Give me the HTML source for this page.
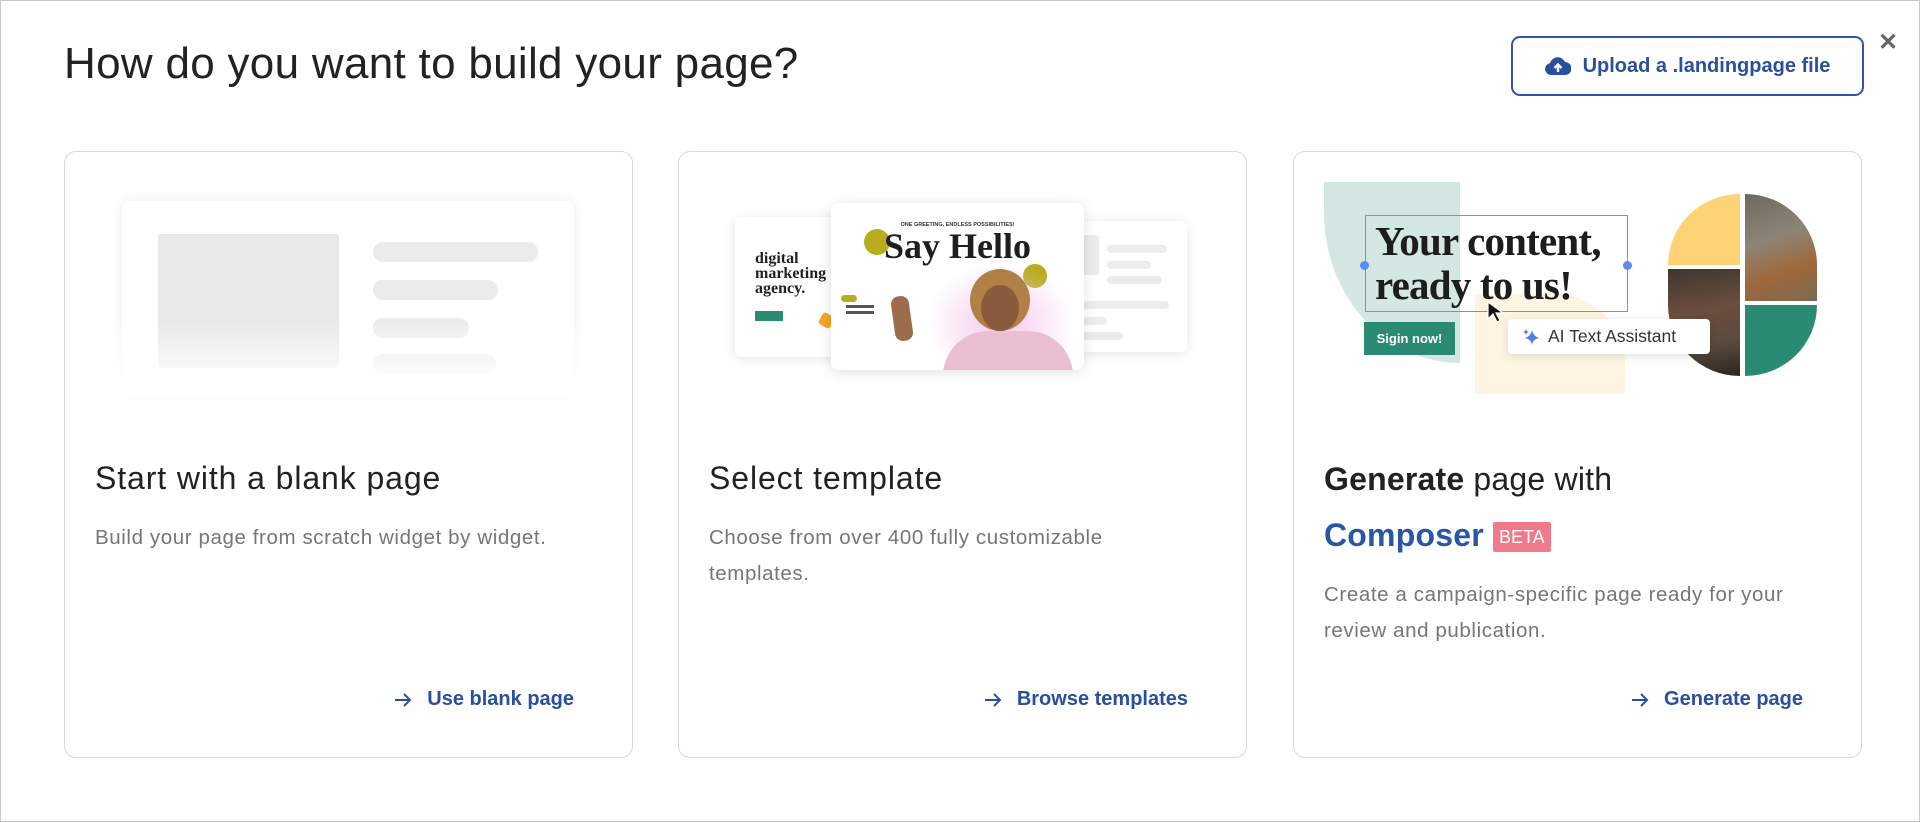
<!DOCTYPE html>
<html><head><meta charset="utf-8"><style>
*{box-sizing:border-box;margin:0;padding:0}
body{width:1920px;height:822px;background:#fff;font-family:"Liberation Sans",Arial,sans-serif;position:relative;overflow:hidden}
.frame{position:absolute;left:0;top:0;width:1920px;height:822px;border:1px solid #c8c8c8}
.abs{position:absolute}
h1{position:absolute;left:64px;top:39px;font-size:44px;font-weight:400;color:#222;letter-spacing:0.3px}
.upload{position:absolute;left:1511px;top:36px;width:353px;height:60px;border:2px solid #2d56a4;border-radius:9px;color:#2a4f9e;font-weight:700;font-size:20px;display:flex;align-items:center;justify-content:center;gap:12px}
.close{position:absolute;left:1878px;top:28px;font-size:24px;color:#666;font-weight:700}
.card{position:absolute;top:151px;width:569px;height:607px;border:1.5px solid #d9d9d9;border-radius:12px;overflow:hidden}
.ttl{position:absolute;left:30px;font-size:32px;color:#222;letter-spacing:0.9px}
.desc{position:absolute;left:30px;font-size:20.5px;color:#767676;line-height:36px;width:470px;letter-spacing:0.6px}
.link{position:absolute;right:58px;top:536px;color:#2a4f9e;font-weight:700;font-size:20px;display:flex;align-items:center;gap:14px}
.bar{position:absolute;background:#ebebeb;border-radius:12px;height:20px}
</style></head><body>
<div class="frame"></div>
<h1>How do you want to build your page?</h1>
<div class="upload"><svg width="26" height="20" viewBox="0 0 26 20"><path d="M6 19a6 6 0 0 1-1-11.9A8 8 0 0 1 20 6a6.5 6.5 0 0 1 0 13z" fill="#2a4f9e"/><path d="M13 16V9M9.5 12L13 8.5 16.5 12" stroke="#fff" stroke-width="2.4" fill="none"/></svg>Upload a .landingpage file</div>
<div class="close">✕</div>

<!-- card 1 -->
<div class="card" style="left:64px">
 <div class="abs" style="left:57px;top:49px;width:452px;height:190px;border-radius:6px;box-shadow:0 0 14px rgba(0,0,0,0.07);background:#fff"></div>
 <div class="abs" style="left:93px;top:82px;width:181px;height:134px;background:#e8e8e8;border-radius:3px"></div>
 <div class="bar" style="left:308px;top:90px;width:165px"></div>
 <div class="bar" style="left:308px;top:128px;width:125px"></div>
 <div class="bar" style="left:308px;top:166px;width:96px"></div>
 <div class="bar" style="left:308px;top:202px;width:123px"></div>
 <div class="abs" style="left:40px;top:165px;width:490px;height:80px;background:linear-gradient(rgba(255,255,255,0),#fff 90%)"></div>
 <div class="ttl" style="top:308px">Start with a blank page</div>
 <div class="desc" style="top:368px;width:500px">Build your page from scratch widget by widget.</div>
 <div class="link"><svg width="20" height="16" viewBox="0 0 20 16"><path d="M2 8H17M11 2L17 8 11 14" stroke="#2a4f9e" stroke-width="2" fill="none"/></svg>Use blank page</div>
</div>

<!-- card 2 -->
<div class="card" style="left:678px">
 <div class="abs" style="left:400px;top:69px;width:108px;height:131px;background:#fff;border-radius:6px;box-shadow:0 2px 12px rgba(0,0,0,0.1)">
  <div class="abs" style="left:4px;top:14px;width:16px;height:40px;background:#ececec;border-radius:3px"></div>
  <div class="abs" style="left:28px;top:24px;width:60px;height:8px;background:#ececec;border-radius:4px"></div>
  <div class="abs" style="left:28px;top:40px;width:44px;height:8px;background:#ececec;border-radius:4px"></div>
  <div class="abs" style="left:28px;top:55px;width:55px;height:8px;background:#ececec;border-radius:4px"></div>
  <div class="abs" style="left:4px;top:80px;width:86px;height:8px;background:#ececec;border-radius:4px"></div>
  <div class="abs" style="left:4px;top:96px;width:24px;height:8px;background:#ececec;border-radius:4px"></div>
  <div class="abs" style="left:4px;top:111px;width:40px;height:8px;background:#ececec;border-radius:4px"></div>
 </div>
 <div class="abs" style="left:56px;top:65px;width:130px;height:140px;background:#fff;border-radius:6px;box-shadow:0 2px 12px rgba(0,0,0,0.1)">
  <div class="abs" style="left:20px;top:34px;font-family:'Liberation Serif',serif;font-weight:700;font-size:16px;line-height:15px;color:#222">digital<br>marketing<br>agency.</div>
  <div class="abs" style="left:20px;top:94px;width:28px;height:10px;background:#2b8a74"></div>
  <div class="abs" style="left:85px;top:97px;width:13px;height:13px;background:#f5a623;border-radius:3px;transform:rotate(30deg)"></div>
 </div>
 <div class="abs" style="left:152px;top:51px;width:253px;height:167px;background:#fff;border-radius:8px;box-shadow:0 2px 14px rgba(0,0,0,0.12);overflow:hidden">
  <div class="abs" style="left:0;top:19px;width:253px;text-align:center;font-size:5.5px;font-weight:700;color:#333">ONE GREETING, ENDLESS POSSIBILITIES!</div>
  <div class="abs" style="left:33px;top:26px;width:26px;height:26px;border-radius:50%;background:#b6ad1f"></div>
  <div class="abs" style="left:192px;top:61px;width:24px;height:24px;border-radius:50%;background:#b6ad1f"></div>
  <div class="abs" style="left:0;top:22px;width:253px;text-align:center;font-family:'Liberation Serif',serif;font-weight:700;font-size:36px;color:#1e1e1e">Say Hello</div>
  <div class="abs" style="left:95px;top:60px;width:150px;height:120px;border-radius:50%;background:radial-gradient(#f5c8ee,rgba(255,255,255,0) 70%)"></div>
  <div class="abs" style="left:112px;top:128px;width:130px;height:60px;border-radius:45px 45px 0 0;background:#ebbfd2"></div>
  <div class="abs" style="left:139px;top:66px;width:60px;height:62px;border-radius:50%;background:#b08047"></div>
  <div class="abs" style="left:150px;top:82px;width:38px;height:46px;border-radius:50%;background:#8a5a3c"></div>
  <div class="abs" style="left:62px;top:93px;width:18px;height:45px;border-radius:8px;background:#9c6c4c;transform:rotate(-8deg)"></div>
  <div class="abs" style="left:10px;top:92px;width:16px;height:7px;border-radius:4px;background:#b6ad1f"></div>
  <div class="abs" style="left:15px;top:102px;width:28px;height:3px;background:#555"></div>
  <div class="abs" style="left:15px;top:108px;width:28px;height:3px;background:#555"></div>
 </div>
 <div class="ttl" style="top:308px">Select template</div>
 <div class="desc" style="top:368px;width:430px">Choose from over 400 fully customizable templates.</div>
 <div class="link"><svg width="20" height="16" viewBox="0 0 20 16"><path d="M2 8H17M11 2L17 8 11 14" stroke="#2a4f9e" stroke-width="2" fill="none"/></svg>Browse templates</div>
</div>

<!-- card 3 -->
<div class="card" style="left:1293px">
 <div class="abs" style="left:30px;top:30px;width:136px;height:181px;background:#d5e7e2;border-radius:0 0 0 136px/0 0 0 150px"></div>
 <div class="abs" style="left:181px;top:142px;width:150px;height:100px;background:#fdf5e2;border-radius:0 70px 0 0"></div>
 <div class="abs" style="left:71px;top:63px;width:263px;height:97px;border:1.5px solid #6b94e6"></div>
 <div class="abs" style="left:66px;top:109px;width:9px;height:9px;border-radius:50%;background:#5b8def"></div>
 <div class="abs" style="left:329px;top:109px;width:9px;height:9px;border-radius:50%;background:#5b8def"></div>
 <div class="abs" style="left:81px;top:67px;font-family:'Liberation Serif',serif;font-weight:700;font-size:41px;line-height:44px;color:#1d1d1d;letter-spacing:-0.8px">Your content,<br>ready to us!</div>
 <div class="abs" style="left:70px;top:170px;width:91px;height:33px;background:#2b8a74;color:#fff;font-weight:700;font-size:13px;text-align:center;line-height:33px">Sigin now!</div>
 <svg class="abs" style="left:192px;top:148px" width="20" height="24" viewBox="0 0 20 24"><path d="M2 2L2 19 7 14 11 22 14 20.5 10 13 17 13Z" fill="#111" stroke="#fff" stroke-width="1.2"/></svg>
 <div class="abs" style="left:374px;top:42px;width:72px;height:71px;background:#fed375;border-radius:72px 0 0 0/71px 0 0 0"></div>
 <div class="abs" style="left:451px;top:42px;width:72px;height:107px;background:linear-gradient(160deg,#6e6860,#8d8478 40%,#a0683a 70%,#7a6a55);border-radius:0 72px 0 0/0 71px 0 0"></div>
 <div class="abs" style="left:374px;top:117px;width:72px;height:107px;background:linear-gradient(170deg,#3e3630,#6b4e3e 40%,#5a4a3e 70%,#2a2420);border-radius:0 0 0 72px/0 0 0 71px"></div>
 <div class="abs" style="left:451px;top:153px;width:72px;height:71px;background:#2b8a74;border-radius:0 0 72px 0/0 0 71px 0"></div>
 <div class="abs" style="left:214px;top:167px;width:202px;height:35px;background:#fff;border-radius:4px;box-shadow:0 2px 10px rgba(0,0,0,0.12);font-size:17.5px;color:#333;line-height:35px;padding-left:40px">AI Text Assistant
  <svg class="abs" style="left:14px;top:9px" width="18" height="18" viewBox="0 0 18 18"><path d="M10 2Q11 8 17 10Q11 11 10 17Q9 11 3 10Q9 8 10 2Z" fill="#4f7fe8"/><path d="M4 1Q4.5 3.5 7 4Q4.5 4.5 4 7Q3.5 4.5 1 4Q3.5 3.5 4 1Z" fill="#4f7fe8"/></svg>
 </div>
 <div class="ttl" style="top:309px;letter-spacing:0.2px"><b>Generate</b> page with</div>
 <div class="ttl" style="top:365px;color:#2a56a6;font-weight:700;letter-spacing:0.2px">Composer <span style="display:inline-block;vertical-align:3px;background:#f07a8c;color:#fff;font-weight:400;font-size:18px;padding:3px 6px;border-radius:2px;line-height:24px;letter-spacing:0">BETA</span></div>
 <div class="desc" style="top:425px;width:480px">Create a campaign-specific page ready for your review and publication.</div>
 <div class="link"><svg width="20" height="16" viewBox="0 0 20 16"><path d="M2 8H17M11 2L17 8 11 14" stroke="#2a4f9e" stroke-width="2" fill="none"/></svg>Generate page</div>
</div>
</body></html>
